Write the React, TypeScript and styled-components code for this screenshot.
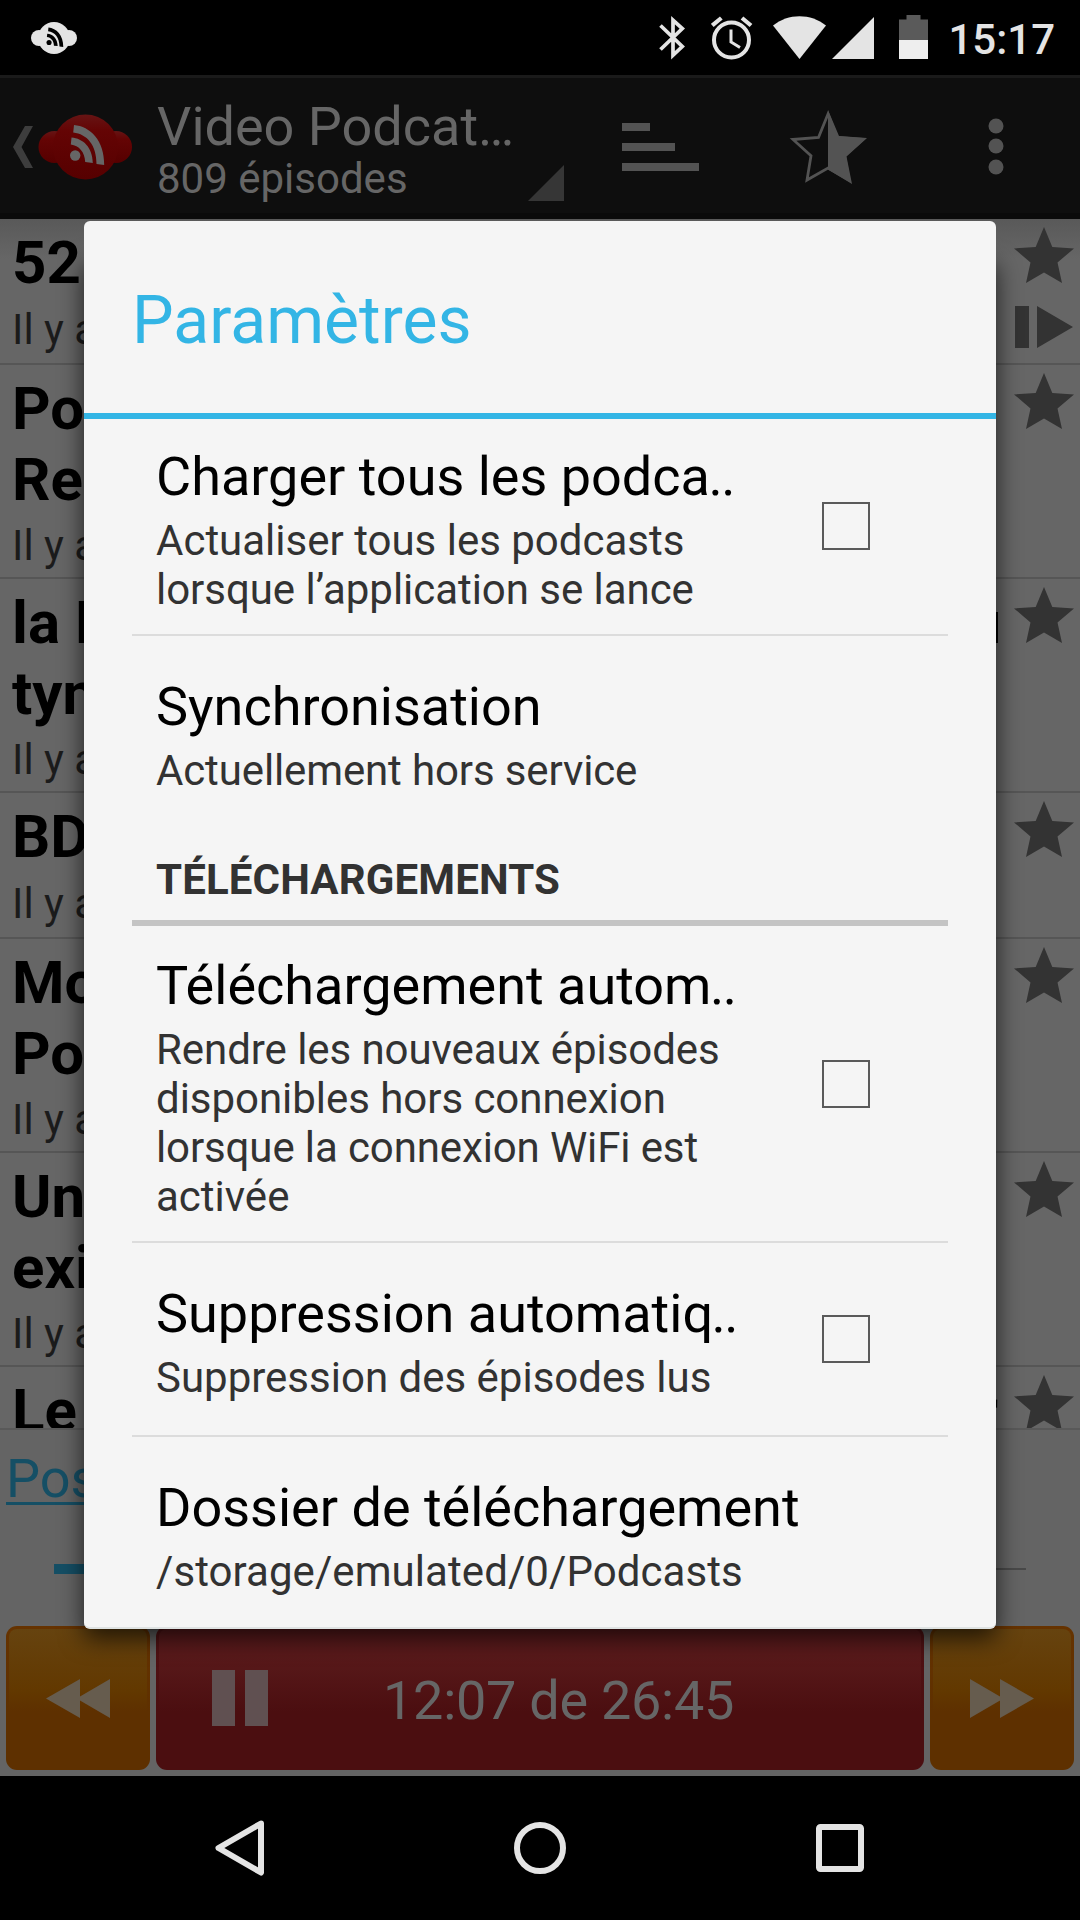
import React from "react";
import styled, { createGlobalStyle } from "styled-components";

const GlobalStyle = createGlobalStyle`
  * { box-sizing: border-box; }
  html, body { margin: 0; padding: 0; background: #000; }
  body { font-family: Roboto, "Noto Sans", sans-serif; overflow: hidden; }
  svg { display: block; flex: none; }
`;

const Screen = styled.div`
  position: relative;
  width: 1080px;
  height: 1920px;
  display: flex;
  flex-direction: column;
  background: #666;
  overflow: hidden;
`;

const StatusBar = styled.header`
  height: 75px;
  flex: none;
  display: flex;
  align-items: flex-start;
  background: #000;
  padding: 15px 25px 0 31px;
`;

const StatusIcon = styled.span<{ $left?: number; $top?: number }>`
  margin-left: ${(p) => p.$left ?? 0}px;
  margin-top: ${(p) => p.$top ?? 0}px;
`;

const Clock = styled.time`
  margin-left: auto;
  color: #e4e4e4;
  font-size: 42px;
  font-weight: 500;
  line-height: 49px;
`;

const ActionBar = styled.nav`
  height: 144px;
  flex: none;
  display: flex;
  align-items: center;
  background: #0e0e0e;
  border-top: 3px solid #1a1a1a;
  border-bottom: 6px solid #0a0a0a;
  padding: 2px 0 0 13px;
`;

const Headings = styled.div`
  width: 371px;
  margin-left: 25px;
  margin-top: 9px;
  color: #666;
  white-space: nowrap;
`;

const BarTitle = styled.div`
  font-size: 54px;
  line-height: 54px;
`;

const BarSubtitle = styled.div`
  font-size: 42px;
  line-height: 49px;
`;

const Spinner = styled.svg`
  align-self: flex-end;
  margin-bottom: 12px;
`;

const BarIcon = styled.svg<{ $left: number }>`
  margin-left: ${(p) => p.$left}px;
`;

const List = styled.main`
  height: 1209px;
  flex: none;
  overflow: hidden;
  background: linear-gradient(#595959, #666 40px);
`;

const Episode = styled.article<{ $lines: number }>`
  height: ${(p) => (p.$lines === 2 ? 214 : 146)}px;
  display: flex;
  justify-content: space-between;
  border-bottom: 2px solid #565656;
  padding: 8px 6px 0 12px;
`;

const EpisodeTitle = styled.h2`
  margin: 0;
  color: #000;
  font-size: 60px;
  font-weight: 700;
  line-height: 71px;
  white-space: nowrap;
`;

const TitleLine = styled.span`
  display: flex;
  justify-content: space-between;
  width: 988px;
`;

const TitleTail = styled.span<{ $inset: number }>`
  margin-right: ${(p) => p.$inset}px;
`;

const EpisodeDate = styled.p<{ $lines: number }>`
  margin: ${(p) => (p.$lines === 2 ? 6 : 7)}px 0 0;
  color: #1b1b1b;
  font-size: 42px;
  line-height: 49px;
`;

const EpisodeIcons = styled.div`
  display: flex;
  flex-direction: column;
  gap: 23px;
`;

const Player = styled.section`
  height: 348px;
  flex: none;
  display: flex;
  flex-direction: column;
  border-top: 2px solid #595959;
  background: #646464;
  padding: 17px 6px 6px;
`;

const NowPlaying = styled.a`
  color: #154f65;
  font-size: 54px;
  line-height: 63px;
  text-decoration: underline;
  text-decoration-thickness: 3px;
  text-underline-offset: 5px;
`;

const Seek = styled.div`
  height: 10px;
  margin: 54px 48px 52px;
  display: flex;
  align-items: center;
`;

const Played = styled.div`
  width: 440px;
  height: 10px;
  background: #154f65;
`;

const Remaining = styled.div`
  flex: 1;
  height: 2px;
  background: #494949;
`;

const Controls = styled.div`
  display: flex;
  gap: 6px;
  height: 144px;
`;

const SkipButton = styled.button`
  width: 144px;
  display: flex;
  align-items: center;
  justify-content: center;
  border: 3px solid transparent;
  border-radius: 11px;
  padding: 0;
  background:
    linear-gradient(#66430f, #623800 45%, #5e3000 60%, #5e3000) padding-box,
    linear-gradient(#663300, #5e3000 60%) border-box;
`;

const PlayButton = styled.button`
  flex: 1;
  display: flex;
  align-items: center;
  border: 3px solid transparent;
  border-radius: 11px;
  padding: 0 0 0 53px;
  font-family: inherit;
  font-size: 54px;
  color: #666;
  background:
    linear-gradient(#5f1c1e, #571819 25%, #4b0e10 60%, #4b0e10) padding-box,
    linear-gradient(#521214, #4b0e10 60%) border-box;
`;

const TimeLabel = styled.span`
  margin-left: 115px;
  margin-top: 4px;
  letter-spacing: -0.27px;
`;

const SystemNav = styled.footer`
  height: 144px;
  flex: none;
  display: flex;
  align-items: center;
  gap: 250px;
  padding-left: 214px;
  background: #000;
`;

const Dialog = styled.div`
  position: absolute;
  left: 84px;
  top: 221px;
  width: 912px;
  height: 1408px;
  border-radius: 6px;
  background: #f5f5f5;
  border-bottom: 2px solid #dfe3e3;
  overflow: hidden;
`;

const DialogShadow = styled.div`
  position: absolute;
  left: 84px;
  top: 255px;
  width: 912px;
  height: 1374px;
  border-radius: 6px;
  box-shadow: 0 9px 24px rgba(0, 0, 0, 0.7);
`;

const DialogTitle = styled.h1`
  margin: 0;
  height: 198px;
  border-bottom: 6px solid #33b5e5;
  padding: 61px 48px 0;
  color: #33b5e5;
  font-size: 66px;
  font-weight: 400;
  line-height: 77px;
`;

const Preference = styled.div<{ $height: number; $top: number; $divided?: boolean }>`
  height: ${(p) => p.$height}px;
  margin: 0 48px;
  padding: ${(p) => p.$top}px 78px 0 24px;
  display: flex;
  justify-content: space-between;
  border-bottom: ${(p) => (p.$divided ? "2px solid #dcdcdc" : "0")};
`;

const PreferenceName = styled.div`
  color: #000;
  font-size: 54px;
  line-height: 63px;
  white-space: nowrap;
`;

const Dots = styled.span`
  margin-left: -1.5px;
  letter-spacing: -1.5px;
`;

const Summary = styled.div`
  margin-top: 8px;
  color: #323232;
  font-size: 42px;
  line-height: 49px;
`;

const SummaryLine = styled.div<{ $spacing: number }>`
  letter-spacing: ${(p) => p.$spacing}px;
  white-space: nowrap;
`;

const Checkbox = styled.span<{ $top: number }>`
  flex: none;
  width: 48px;
  height: 48px;
  margin-top: ${(p) => p.$top}px;
  border: 2px solid #5a5a5a;
`;

const Category = styled.h3`
  height: 98px;
  margin: 0 48px;
  padding: 27px 24px 0;
  border-bottom: 6px solid #c4c4c4;
  color: #323232;
  font-size: 42px;
  font-weight: 700;
  line-height: 49px;
  letter-spacing: 0.14px;
`;

const STAR = "30,0 38.3,20 60,21.4 43.5,35.6 48,56 30,45.6 12,56 16.5,35.6 0,21.4 21.7,20";

const Star = () => (
  <svg width="60" height="56" viewBox="0 0 60 56">
    <polygon points={STAR} fill="#333" />
  </svg>
);

const PlayNext = () => (
  <svg width="60" height="42" viewBox="0 0 60 42">
    <path d="M1 0h14v42H1zM23 0l36 21-36 21z" fill="#333" />
  </svg>
);

const Waves = ({ color }: { color: string }) => (
  <g fill={color}>
    <circle cx="5.2" cy="30.5" r="5.2" />
    <path d="M1.5 12.5C13 13.5 22.5 22 22.8 38l-7.6-1C14.8 27 9 20.5 0.8 19.5z" />
    <path d="M4 0C20 1.5 34.5 15 34.2 40l-7.7-1C26.5 20 17 9 3.2 7.5z" />
  </g>
);

const CloudSmall = () => (
  <svg width="46" height="32" viewBox="0 0 46 32">
    <g fill="#e4e4e4">
      <circle cx="8" cy="16" r="8" />
      <circle cx="38" cy="16" r="8" />
      <circle cx="23" cy="16" r="16" />
    </g>
    <g transform="translate(15.5 5.5) scale(0.49)">
      <Waves color="#000" />
    </g>
  </svg>
);

const CloudLogo = () => (
  <svg width="94" height="66" viewBox="0 0 94 66">
    <defs>
      <linearGradient id="ball" x1="0" y1="0" x2="0" y2="1">
        <stop offset="0" stopColor="#661414" />
        <stop offset="0.25" stopColor="#640404" />
        <stop offset="1" stopColor="#560000" />
      </linearGradient>
    </defs>
    <circle cx="16.5" cy="33" r="16" fill="url(#ball)" />
    <circle cx="78" cy="33" r="16" fill="url(#ball)" />
    <circle cx="47.5" cy="33" r="32.5" fill="url(#ball)" />
    <g transform="translate(32 11)">
      <Waves color="#666" />
    </g>
  </svg>
);

const Bluetooth = () => (
  <svg width="27" height="44" viewBox="0 0 27 44">
    <path d="M1.5 9.5L23.3 30.5 14 39.3V4.2L23.3 12.5 1.5 33.5" fill="none" stroke="#e4e4e4" strokeWidth="3.7" />
  </svg>
);

const Alarm = () => (
  <svg width="42" height="44" viewBox="0 0 42 44">
    <g fill="none" stroke="#e4e4e4">
      <circle cx="20.5" cy="24" r="17.5" strokeWidth="4" />
      <path d="M1.3 9.5L10.3 2M40 9.5L31 2" strokeWidth="4.2" />
      <path d="M20 13.5V26l9 5.5" strokeWidth="3" />
    </g>
  </svg>
);

const Wifi = () => (
  <svg width="53" height="43" viewBox="0 0 53 43">
    <path d="M0 9.5C15-3 38-3 53 9.5L26.5 43z" fill="#e4e4e4" />
  </svg>
);

const Signal = () => (
  <svg width="42" height="42" viewBox="0 0 42 42">
    <path d="M42 0v42H0z" fill="#e4e4e4" />
  </svg>
);

const Battery = () => (
  <svg width="29" height="44" viewBox="0 0 29 44">
    <path d="M7.5 0h14v4.5H29V25H0V4.5h7.5z" fill="#5a5a5a" />
    <path d="M0 25h29v19H0z" fill="#eee" />
  </svg>
);

type EpisodeItem = { lines: string[]; next?: boolean; tail?: string; inset?: number };

const episodes: EpisodeItem[] = [
  { lines: ["52"], next: true },
  { lines: ["Po", "Re"] },
  { lines: ["la L", "tyn"], tail: "u", inset: -1 },
  { lines: ["BD"] },
  { lines: ["Mo", "Po"] },
  { lines: ["Un", "exi"] },
  { lines: ["Le", ""], tail: "r", inset: 2 },
];

type Line = [text: string, spacing: number];
type Pref = {
  name: string;
  cut?: boolean;
  summary: Line[];
  height: number;
  top: number;
  box?: number;
  divided?: boolean;
};

const preferences: Pref[] = [
  {
    name: "Charger tous les podca",
    cut: true,
    summary: [
      ["Actualiser tous les podcasts", 0],
      ["lorsque l’application se lance", -0.04],
    ],
    height: 217,
    top: 26,
    box: 57,
    divided: true,
  },
  { name: "Synchronisation", summary: [["Actuellement hors service", -0.13]], height: 192, top: 39 },
];

const downloads: Pref[] = [
  {
    name: "Téléchargement autom",
    cut: true,
    summary: [
      ["Rendre les nouveaux épisodes", -0.06],
      ["disponibles hors connexion", -0.04],
      ["lorsque la connexion WiFi est", -0.12],
      ["activée", 0],
    ],
    height: 317,
    top: 28,
    box: 106,
    divided: true,
  },
  {
    name: "Suppression automatiq",
    cut: true,
    summary: [["Suppression des épisodes lus", 0]],
    height: 194,
    top: 39,
    box: 33,
    divided: true,
  },
  { name: "Dossier de téléchargement", summary: [["/storage/emulated/0/Podcasts", 0.07]], height: 190, top: 39 },
];

const PreferenceRow = ({ name, cut, summary, height, top, box, divided }: Pref) => (
  <Preference $height={height} $top={top} $divided={divided}>
    <div>
      <PreferenceName>
        {name}
        {cut && <Dots>..</Dots>}
      </PreferenceName>
      <Summary>
        {summary.map(([text, spacing]) => (
          <SummaryLine key={text} $spacing={spacing}>
            {text}
          </SummaryLine>
        ))}
      </Summary>
    </div>
    {box !== undefined && <Checkbox $top={box} role="checkbox" aria-checked="false" />}
  </Preference>
);

export default function App() {
  return (
    <>
      <GlobalStyle />
      <Screen>
        <StatusBar>
          <StatusIcon $top={7}><CloudSmall /></StatusIcon>
          <StatusIcon $left={582} $top={1}><Bluetooth /></StatusIcon>
          <StatusIcon $left={25} $top={1}><Alarm /></StatusIcon>
          <StatusIcon $left={20} $top={1}><Wifi /></StatusIcon>
          <StatusIcon $left={6} $top={2}><Signal /></StatusIcon>
          <StatusIcon $left={25}><Battery /></StatusIcon>
          <Clock>15:17</Clock>
        </StatusBar>

        <ActionBar>
          <svg width="25" height="42" viewBox="0 0 25 42">
            <path d="M12 0h8L8.5 21 20 42h-8L0 21z" fill="#3d3d3d" />
          </svg>
          <CloudLogo />
          <Headings>
            <BarTitle>Video Podcat…</BarTitle>
            <BarSubtitle>809 épisodes</BarSubtitle>
          </Headings>
          <Spinner width="36" height="36" viewBox="0 0 36 36">
            <path d="M36 0v36H0z" fill="#363636" />
          </Spinner>
          <BarIcon $left={57.5} width="77" height="48" viewBox="0 0 77 48">
            <path d="M0 0h28v8H0zM0 20h53v8H0zM0 40h77v8H0z" fill="#535353" />
          </BarIcon>
          <BarIcon $left={90.5} width="78" height="74" viewBox="0 0 78 74">
            <polygon
              points="39,4 48,27.5 74,29.5 55.5,45.8 60,70 39,58 18,70 22,45.8 4,29.5 29.5,27.5"
              fill="none"
              stroke="#535353"
              strokeWidth="2.8"
            />
            <polygon points="39,0 50,26 78,28 57.5,46.5 63,74 39,59.5" fill="#535353" />
          </BarIcon>
          <BarIcon $left={121} width="16" height="57" viewBox="0 0 16 57">
            <g fill="#535353">
              <circle cx="8" cy="8" r="7.5" />
              <circle cx="8" cy="28" r="7.5" />
              <circle cx="8" cy="49" r="7.5" />
            </g>
          </BarIcon>
        </ActionBar>

        <List>
          {episodes.map((e, i) => (
            <Episode key={i} $lines={e.lines.length}>
              <div>
                <EpisodeTitle>
                  {e.lines.map((line, n) => (
                    <TitleLine key={n}>
                      <span>{line}</span>
                      {n === 0 && e.tail && <TitleTail $inset={e.inset ?? 0}>{e.tail}</TitleTail>}
                    </TitleLine>
                  ))}
                </EpisodeTitle>
                {e.lines[1] !== "" && <EpisodeDate $lines={e.lines.length}>Il y a</EpisodeDate>}
              </div>
              <EpisodeIcons>
                <Star />
                {e.next && <PlayNext />}
              </EpisodeIcons>
            </Episode>
          ))}
        </List>

        <Player>
          <NowPlaying>Pos</NowPlaying>
          <Seek>
            <Played />
            <Remaining />
          </Seek>
          <Controls>
            <SkipButton aria-label="Reculer">
              <svg width="64" height="39" viewBox="0 0 64 39">
                <path d="M34 0v39L0 19.5zM64 0v39L34 21.5v-4z" fill="#665c4e" />
              </svg>
            </SkipButton>
            <PlayButton>
              <svg width="56" height="56" viewBox="0 0 56 56">
                <path d="M0 0h23v56H0zM33 0h23v56H33z" fill="#605051" />
              </svg>
              <TimeLabel>12:07 de 26:45</TimeLabel>
            </PlayButton>
            <SkipButton aria-label="Avancer">
              <svg width="64" height="39" viewBox="0 0 64 39">
                <path d="M30 0v39l34-19.5zM0 0v39l30-17.5v-4z" fill="#665c4e" />
              </svg>
            </SkipButton>
          </Controls>
        </Player>

        <SystemNav>
          <svg width="50" height="56" viewBox="0 0 50 56">
            <path d="M47 3.5L4.5 28 47 52.5z" fill="none" stroke="#e4e4e4" strokeWidth="6" strokeLinejoin="round" />
          </svg>
          <svg width="52" height="52" viewBox="0 0 52 52">
            <circle cx="26" cy="26" r="23" fill="none" stroke="#e4e4e4" strokeWidth="6" />
          </svg>
          <svg width="48" height="48" viewBox="0 0 48 48">
            <rect x="3" y="3" width="42" height="42" rx="1.5" fill="none" stroke="#e4e4e4" strokeWidth="6" />
          </svg>
        </SystemNav>

        <DialogShadow />
        <Dialog role="dialog">
          <DialogTitle>Paramètres</DialogTitle>
          {preferences.map((p) => (
            <PreferenceRow key={p.name} {...p} />
          ))}
          <Category>TÉLÉCHARGEMENTS</Category>
          {downloads.map((p) => (
            <PreferenceRow key={p.name} {...p} />
          ))}
        </Dialog>
      </Screen>
    </>
  );
}
